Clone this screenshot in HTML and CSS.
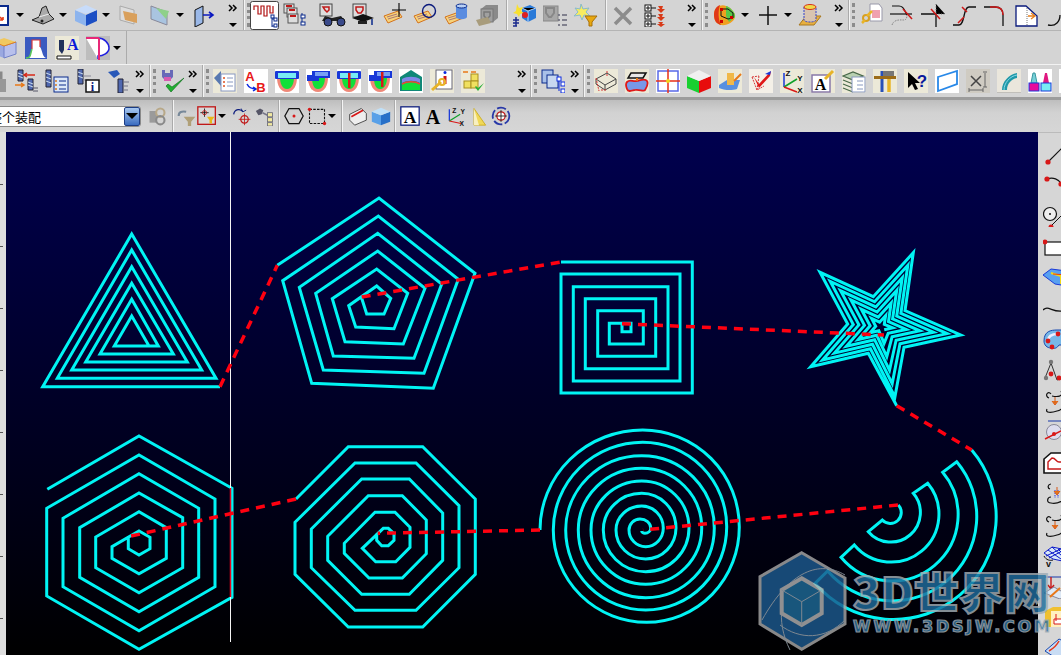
FILE: index.html
```html
<!DOCTYPE html>
<html lang="zh">
<head>
<meta charset="utf-8">
<title>CAD spiral toolpaths</title>
<link rel="stylesheet" href="styles.css">
</head>
<body>
<svg class="defs" aria-hidden="true">
<symbol id="fit" viewBox="0 0 24 24"><rect x="3" y="3" width="19" height="19" fill="#fff" stroke="#0a2a8c" stroke-width="2"/><path d="M8 8l3 3M8 8h3M8 8v3M17 17l-3-3M17 17h-3M17 17v-3" stroke="#e8401a" stroke-width="1.6" fill="none"/></symbol>
<symbol id="dev" viewBox="0 0 24 24"><path d="M1 17l7-3 3-9 4-2 3 8 5 5-11 5z" fill="#aaa" stroke="#222"/><path d="M8 14l10-3" stroke="#eee"/><circle cx="11" cy="18" r="1.5" fill="#222"/></symbol>
<symbol id="cube" viewBox="0 0 24 24"><path d="M1 7l11 5v11L1 18z" fill="#8db4ee"/><path d="M12 12l11-5v11l-11 5z" fill="#1c4fc4"/><path d="M1 7l11-5 11 5-11 4z" fill="#c8dcfa"/></symbol>
<symbol id="ghostbox" viewBox="0 0 24 24"><path d="M3 3l14 4v14l-14-4z" fill="#ddd" stroke="#aaa"/><path d="M6 8l14 3v9l-12-3z" fill="#d9a05c"/></symbol>
<symbol id="wedge" viewBox="0 0 24 24"><path d="M3 3l16 6v13L3 16z" fill="#a9c4e0" stroke="#889"/><path d="M8 5l13 3-3 8z" fill="#8fd08a"/></symbol>
<symbol id="door" viewBox="0 0 24 24"><path d="M3 7l8-4v17l-8 4z" fill="#9ab8e8" stroke="#111"/><path d="M11 12h10M17 9l4 3-4 3" stroke="#0a18c0" stroke-width="1.6" fill="none"/></symbol>
<symbol id="ops" viewBox="0 0 29 29"><rect x=".5" y=".5" width="28" height="28" rx="2" fill="#fff" stroke="#444"/><path d="M4 9V5h4v8h3V5h3v10h3V5h3v7h3V5" fill="none" stroke="#b01010" stroke-width="1.2"/><path d="M22 14v12M22 18h3M22 25h3" stroke="#0a2a8c"/><rect x="21" y="14" width="3" height="3" fill="#fff" stroke="#0a2a8c"/><rect x="24" y="17" width="3" height="3" fill="#fff" stroke="#0a2a8c"/><rect x="24" y="23" width="3" height="3" fill="#fff" stroke="#0a2a8c"/></symbol>
<symbol id="ops2" viewBox="0 0 24 24"><rect x="1" y="1" width="10" height="9" fill="#ddd" stroke="#555"/><rect x="4" y="5" width="10" height="9" fill="#ddd" stroke="#555"/><rect x="5" y="11" width="10" height="9" fill="#ddd" stroke="#555"/><path d="M3 3h6M6 7h6M7 13h6" stroke="#c01818" stroke-width="2"/><path d="M19 10v12" stroke="#0a2a8c"/><rect x="18" y="12" width="4" height="3" fill="#fff" stroke="#0a2a8c"/><rect x="18" y="19" width="4" height="3" fill="#fff" stroke="#0a2a8c"/></symbol>
<symbol id="bino" viewBox="0 0 28 24"><rect x="1" y="1" width="12" height="12" fill="#ddd" stroke="#444"/><path d="M4 4h6v3l-2 2-2-2z" fill="none" stroke="#c01818" stroke-width="1.5"/><path d="M6 13l7 2 9-2 4 5H3z" fill="#222"/><circle cx="9" cy="19" r="4" fill="#3a4a8a" stroke="#111"/><circle cx="22" cy="19" r="4" fill="#3a4a8a" stroke="#111"/></symbol>
<symbol id="cap" viewBox="0 0 24 24"><rect x="2" y="1" width="13" height="13" fill="#ddd" stroke="#444"/><path d="M5 4h7v3l-2 3H7L5 7z" fill="none" stroke="#c01818" stroke-width="1.5"/><path d="M1 15l11-4 11 4-11 4z" fill="#111"/><path d="M7 18v3h9v-3" fill="#222"/><path d="M21 16v6" stroke="#0a2a8c" stroke-width="1.5"/></symbol>
<symbol id="tagx" viewBox="0 0 24 24"><path d="M2 13l14-5 4 6-14 6z" fill="#f6d27a" stroke="#d4721c"/><path d="M5 14l10-3M6 16l10-3" stroke="#a77"/><path d="M17 0v14M10 7h14" stroke="#000" stroke-width="1.1"/></symbol>
<symbol id="tago" viewBox="0 0 24 24"><path d="M1 13l14-5 4 6-14 6z" fill="#f6d27a" stroke="#d4721c"/><path d="M4 14l10-3M5 16l10-3" stroke="#a77"/><circle cx="16" cy="8" r="6.5" fill="none" stroke="#0a1a7c" stroke-width="1.4"/></symbol>
<symbol id="tagc" viewBox="0 0 24 24"><path d="M1 14l14-5 4 6-14 6z" fill="#f6d27a" stroke="#d4721c"/><path d="M4 15l10-3M5 17l10-3" stroke="#a77"/><path d="M12 3v11a5 2 0 0 0 11 0V3z" fill="#5a8ce0"/><ellipse cx="17.500" cy="3" rx="5.500" ry="2" fill="#b8d0f4" stroke="#0a2a8c"/></symbol>
<symbol id="ghostgear" viewBox="0 0 24 24"><path d="M6 6l5-4h12v13l-5 4H6z" fill="#8a8a8a"/><rect x="6" y="6" width="12" height="13" fill="#a0a0a0" stroke="#777"/><path d="M9 9h6v4l-3 3-3-3z" fill="none" stroke="#777" stroke-width="1.5"/><path d="M1 17l12-3 3 6-12 3z" fill="#a89c7c"/></symbol>
<symbol id="spark" viewBox="0 0 24 24"><path d="M10 5l8-3 6 3v10l-8 4-6-4z" fill="#2a7ad8"/><path d="M10 5l6 3 8-3M16 8v11" stroke="#bcd6f8"/><path d="M5 1l2 4 4-1-2 4 3 2-4 1-1 3-2-3-4-1 3-2z" fill="#f8e030"/><circle cx="13" cy="12" r="3" fill="#e02020"/><path d="M1 23h4M1 20h6M1 17h6M4 14v9" stroke="#1a2a8c" stroke-width="1.5"/></symbol>
<symbol id="ghostlist" viewBox="0 0 24 24"><rect x="0" y="3" width="15" height="15" fill="#a8a8a8" stroke="#888"/><path d="M3 5h8v5l-3 4H6L3 10z" fill="none" stroke="#888" stroke-width="2"/><path d="M15 12h2M19 12h5M15 17h2M19 17h5M15 22h2M19 22h5" stroke="#667" stroke-width="1.5"/></symbol>
<symbol id="starf" viewBox="0 0 24 24"><path d="M7 1l2 5 6-1-3 4 4 4-6-1-2 5-2-5-6 1 4-4L1 5l5 1z" fill="#f8ec60" stroke="#8bc"/><path d="M11 13h12l-5 6v4h-3v-4z" fill="#e8a810" stroke="#a87008"/></symbol>
<symbol id="xg" viewBox="0 0 24 24"><path d="M4 5l16 16M20 5L4 21" stroke="#8c8c8c" stroke-width="3.500"/></symbol>
<symbol id="treea" viewBox="0 0 24 24"><g fill="#fff" stroke="#111"><rect x="1" y="2" width="6" height="6"/><rect x="1" y="10" width="6" height="6"/><rect x="1" y="18" width="6" height="6"/></g><path d="M4 3v4M2 5h4M4 11v4M2 13h4M4 19v4M2 21h4M7 5h5M7 13h5M7 21h5" stroke="#111"/><path d="M14 3h5l-1 3h3l-4 4-4-4h3z M14 11h5l-1 3h3l-4 4-4-4h3z M14 19h5l-1 2h3l-4 3-4-3h3z" fill="#d83a18"/></symbol>
<symbol id="rainbow" viewBox="0 0 24 24"><path d="M2 12C2 3 10 1 14 3c4 1 10 7 9 11-1 5-8 9-14 8C5 21 2 18 2 12z" fill="#f0a020"/><path d="M2 12C2 6 5 3 8 2c-2 6-2 14 1 20-4-1-7-4-7-10z" fill="#e03818"/><path d="M14 3c4 1 10 7 9 11l-6 5-3-6z" fill="#58c848"/><path d="M9 6h7l5 4v5l-5 1-7-3z" fill="none" stroke="#111"/><g fill="#c00"><rect x="8" y="5" width="3" height="3"/><rect x="8" y="17" width="3" height="3"/><rect x="18" y="13" width="3" height="3"/></g></symbol>
<symbol id="cross" viewBox="0 0 24 24"><path d="M12 3v19M3 12h18" stroke="#111" stroke-width="1.5"/></symbol>
<symbol id="cyl" viewBox="0 0 24 24"><path d="M1 22l7-9h15l-7 9z" fill="#e8b040" stroke="#a87820"/><path d="M6 4v13a6 2 0 0 0 12 0V4" fill="#d8c4b0" stroke="#3040c8" stroke-dasharray="2 1"/><ellipse cx="12" cy="4" rx="6" ry="2.500" fill="#f0d848" stroke="#d83018"/></symbol>
<symbol id="keydoc" viewBox="0 0 24 24"><path d="M11 1h9l3 4v13H11z" fill="#fff" stroke="#99a"/><path d="M13 7h8v8h-8z" fill="#f0a0b0"/><circle cx="7" cy="15" r="3" fill="none" stroke="#d8a020" stroke-width="2"/><path d="M8 13l5-5M3 20l3-3" stroke="#e8b428" stroke-width="2.500"/></symbol>
<symbol id="trim1" viewBox="0 0 24 24"><path d="M2 3h7c6 0 6 7 8 9" fill="none" stroke="#111" stroke-width="1.2"/><path d="M0 11h22" stroke="#111" stroke-width="1.2"/><path d="M2 22c2-6 8-5 12-5 2 0 3-2 3-5" fill="none" stroke="#888" stroke-dasharray="1.500 1"/><path d="M13 6l9 10" stroke="#d01818" stroke-width="1.500"/></symbol>
<symbol id="trim2" viewBox="0 0 24 24"><path d="M0 11h15M15 11v13" stroke="#111" stroke-width="1.300"/><path d="M15 1v10h9" stroke="#777" stroke-dasharray="1 1.500"/><path d="M10 6l9 10" stroke="#d01818" stroke-width="1.500"/></symbol>
<symbol id="trim3" viewBox="0 0 24 24"><path d="M1 22h6c6 0 4-18 10-18h7" fill="none" stroke="#111" stroke-width="1.300"/><path d="M10 4l5 5M6 20l6-6" stroke="#d01818" stroke-width="1.500"/></symbol>
<symbol id="trim4" viewBox="0 0 24 24"><path d="M1 4h11c6 0 8 4 8 8v11" fill="none" stroke="#111" stroke-width="1.300"/><path d="M7 4h5c5 0 8 3 8 8" fill="none" stroke="#d01818" stroke-width="1.500"/></symbol>
<symbol id="chamf" viewBox="0 0 24 24"><path d="M2 3h10l11 10v10H2z" fill="#fff" stroke="#0a1a7c" stroke-width="1.300"/><path d="M14 13h6M17 10l4 3-4 3" stroke="#e8801c" stroke-width="1.300" fill="none"/><path d="M13 5v18" stroke="#777" stroke-dasharray="1 1"/></symbol>
<symbol id="hook" viewBox="0 0 24 24"><path d="M3 22c8 2 12-4 12-10" fill="none" stroke="#111" stroke-width="1.300"/></symbol>
<symbol id="boxy" viewBox="0 0 24 24"><path d="M1 6l10 4v12L1 18z" fill="#9aa8e0"/><path d="M11 10l12-4v12l-12 4z" fill="#b8c0ec" stroke="#7080c8"/><path d="M1 6l10-4 12 4-12 4z" fill="#f0c860"/><path d="M1 6l10 4 12-4" stroke="#e08020" fill="none"/></symbol>
<symbol id="peak" viewBox="0 0 24 24"><path d="M1 1h22v22H1z" fill="#3a5ac0"/><path d="M2 22c5 0 4-3 6-9V4h8v7c3 4 2 11 7 11z" fill="#fff"/><path d="M2 22c5 0 4-3 6-9" stroke="#58c858" fill="none" stroke-width="1.500"/><path d="M8 13V4h8v7" stroke="#d83a3a" fill="none" stroke-width="1.200"/></symbol>
<symbol id="apen" viewBox="0 0 24 24"><rect width="24" height="24" fill="#ece9d8"/><path d="M4 4h5v10l-2 4-3-4z" fill="#20305c"/><path d="M2 20h14v3H2z" fill="#fff" stroke="#111"/></symbol>
<symbol id="arcpink" viewBox="0 0 24 24"><rect width="24" height="24" fill="#bdbdbd"/><path d="M0 2h12c6 0 11 5 11 10s-6 8-11 8v3" fill="#fff" stroke="#2020e0" stroke-width="1.500"/><path d="M0 2h13M13 2v22" stroke="#e82878" stroke-width="2" fill="none"/></symbol>
<symbol id="lock" viewBox="0 0 24 24"><rect x="1" y="10" width="22" height="13" fill="#989898"/><path d="M6 10V4h12v6" fill="none" stroke="#888" stroke-width="3"/></symbol>
<symbol id="spra" viewBox="0 0 24 24"><path d="M4 1h5v11H4zM14 10h5v11h-5z" fill="#5068b0" stroke="#223"/><path d="M4 4l5 2M4 7l5 2M14 13l5 2M14 16l5 2" stroke="#cde"/><path d="M21 6H11M13 4l-3 2 3 2" stroke="#d82818" fill="none" stroke-width="1.500"/><path d="M1 16h8M7 14l3 2-3 2" stroke="#e87818" fill="none" stroke-width="1.500"/><path d="M19 22h5M19 19h5" stroke="#556"/></symbol>
<symbol id="sprl" viewBox="0 0 24 24"><path d="M1 1h5v17H1z" fill="#5068b0" stroke="#223"/><path d="M1 4l5 2M1 8l5 2M1 12l5 2" stroke="#cde"/><rect x="9" y="8" width="14" height="15" fill="#dce8f8" stroke="#0a2a8c"/><path d="M14 12h7M14 16h7M14 20h7" stroke="#0a2a8c"/><path d="M10 12h2M10 16h2M10 20h2" stroke="#d87820" stroke-width="1.500"/></symbol>
<symbol id="spri" viewBox="0 0 24 24"><path d="M2 0h5v15H2z" fill="#5068b0" stroke="#223"/><path d="M2 3l5 2M2 7l5 2" stroke="#cde"/><path d="M7 7h8M7 11h6" stroke="#889"/><rect x="10" y="11" width="13" height="12" fill="#fff" stroke="#111" stroke-width="1.500"/></symbol>
<symbol id="sprf" viewBox="0 0 24 24"><path d="M1 3l9-2 3 4-6 4z" fill="#2858b8"/><path d="M11 10h5v14h-5z" fill="#5068b0" stroke="#223"/><path d="M16 13h6M16 17h5M16 21h5" stroke="#778"/></symbol>
<symbol id="checkt" viewBox="0 0 24 24"><path d="M2 1h3v3h5V1h3v7l-3 3H5L2 8z" fill="#6868b8"/><path d="M4 8h7v4H4z" fill="#d85ab0"/><path d="M6 17l5 6L24 9l-12 9-4-3z" fill="#20b030" stroke="#0a6818" stroke-width=".6"/></symbol>
<symbol id="doclist" viewBox="0 0 24 24"><rect width="24" height="24" fill="#ece9d8"/><path d="M1 9l7-7v15z" fill="#5878b0"/><rect x="8" y="5" width="14" height="17" fill="#fff" stroke="#8898c0"/><path d="M14 9h6M14 13h6M14 17h6" stroke="#8898c0"/><path d="M10 9h2M10 13h2M10 17h2" stroke="#e05020" stroke-width="1.500"/></symbol>
<symbol id="ab" viewBox="0 0 24 24"><rect width="24" height="24" fill="#fff"/><path d="M3 15c2 4 5 5 9 5M9 18l3 2-3 2" fill="none" stroke="#0a2ae0" stroke-width="1.500"/></symbol>
<symbol id="mold1" viewBox="0 0 24 24"><rect width="24" height="24" fill="#fff"/><path d="M2 8h20c0 8-3 15-10 15S2 16 2 8z" fill="#ef8878"/><path d="M5 8h14c0 6-2 12-7 12S5 14 5 8z" fill="#10e038"/><rect x="0" y="2" width="24" height="8" rx="1" fill="#1838d8"/><rect x="3" y="4" width="18" height="5" fill="#78ecf4"/></symbol>
<symbol id="mold2" viewBox="0 0 24 24"><rect width="24" height="24" fill="#fff"/><path d="M2 8h20c0 8-3 15-10 15S2 16 2 8z" fill="#ef8878"/><path d="M6 8h13c0 6-2 12-7 12S6 14 6 8z" fill="#10e038"/><path d="M2 8l5 12" stroke="#ef8878" stroke-width="3"/><rect x="1" y="6" width="12" height="6" fill="#1838d8"/><rect x="6" y="2" width="18" height="7" fill="#1838d8"/><rect x="9" y="3" width="13" height="4" fill="#78a0f4"/></symbol>
<symbol id="mold3" viewBox="0 0 24 24"><rect width="24" height="24" fill="#fff"/><path d="M2 8h20c0 8-3 15-10 15S2 16 2 8z" fill="#ef8878"/><path d="M5 8h14c0 6-2 12-7 12S5 14 5 8z" fill="#10e038"/><rect x="0" y="2" width="24" height="8" rx="1" fill="#1838d8"/><rect x="3" y="4" width="18" height="5" fill="#78ecf4"/><rect x="11" y="4" width="2.500" height="15" fill="#d81818"/></symbol>
<symbol id="mold4" viewBox="0 0 24 24"><rect width="24" height="24" fill="#fff"/><path d="M2 8h20c0 8-3 15-10 15S2 16 2 8z" fill="#ef8878"/><path d="M6 8h13c0 6-2 12-7 12S6 14 6 8z" fill="#10e038"/><rect x="1" y="6" width="12" height="6" fill="#1838d8"/><rect x="6" y="2" width="18" height="7" fill="#1838d8"/><rect x="9" y="3" width="13" height="4" fill="#78a0f4"/><rect x="13" y="3" width="2.500" height="15" fill="#d81818"/></symbol>
<symbol id="mold5" viewBox="0 0 24 24"><rect width="24" height="24" fill="#fff"/><path d="M1 8l11-7 11 7v14H1z" fill="#108878"/><path d="M3 10c5-3 13-3 18 0v4c-5-3-13-3-18 0z" fill="#8088e8"/><path d="M3 15c5-3 13-3 18 0v6H3z" fill="#10e038"/><path d="M3 15c5-3 13-3 18 0" stroke="#e84838" fill="none" stroke-width="1.500"/></symbol>
<symbol id="docikey" viewBox="0 0 24 24"><rect width="24" height="24" fill="#ece9d8"/><rect x="6" y="1" width="16" height="19" fill="#fff" stroke="#667"/><path d="M15 7v8" stroke="#d01818" stroke-width="3"/><circle cx="15" cy="3.500" r="1.500" fill="#0a2ae0"/><path d="M2 21l9-8" stroke="#e8b428" stroke-width="3"/><circle cx="12" cy="13" r="3" fill="none" stroke="#e8b428" stroke-width="2"/></symbol>
<symbol id="yellowchk" viewBox="0 0 24 24"><rect width="24" height="24" fill="#ece9d8"/><g fill="#f0e060" stroke="#a89020"><rect x="10" y="5" width="7" height="7"/><rect x="3" y="12" width="7" height="7"/><rect x="10" y="12" width="7" height="7"/></g><path d="M14 18l3 4 6-8-6 5-2-2z" fill="#28b038"/><path d="M2 3h5M10 3h5" stroke="#e87818" stroke-width="1.500"/></symbol>
<symbol id="doctree" viewBox="0 0 24 24"><rect x="1" y="1" width="11" height="13" fill="#a8c0e8" stroke="#0a2a8c"/><rect x="6" y="6" width="11" height="13" fill="#c8d8f0" stroke="#0a2a8c"/><path d="M18 8v14" stroke="#0a2ae0"/><rect x="16" y="8" width="4" height="4" fill="#fff" stroke="#0a2ae0"/><rect x="20" y="13" width="4" height="4" fill="#fff" stroke="#0a2ae0"/><rect x="20" y="20" width="4" height="4" fill="#fff" stroke="#0a2ae0"/></symbol>
<symbol id="wire" viewBox="0 0 24 24"><rect width="24" height="24" fill="#ece9d8"/><path d="M2 10l11-6 9 6-11 6zM2 10v5l9 6 11-6v-5M11 16v5" fill="none" stroke="#444"/><path d="M13 2v5M2 9l3 13M7 21h6" stroke="#d83838" stroke-dasharray="2 1" fill="none"/></symbol>
<symbol id="blob" viewBox="0 0 24 24"><rect width="24" height="24" fill="#ece9d8"/><path d="M2 13c3-3 6 0 10-1s8-3 10 0-1 7-2 9-6-1-10 0-7 2-8-1-2-5 0-7z" fill="#7898e8" stroke="#e01818" stroke-width="1.800"/><path d="M6 4h15l-3 5H3z" fill="#e8e8e8" stroke="#111" stroke-width="1.500"/><path d="M12 9v3" stroke="#e87818" stroke-width="2"/></symbol>
<symbol id="crossb" viewBox="0 0 24 24"><rect width="24" height="24" fill="#fff"/><rect x="2" y="2" width="20" height="20" fill="#fff" stroke="#5868e8" stroke-width="1.500"/><path d="M12 0v24M0 12h24" stroke="#e83018" stroke-width="1.500"/><circle cx="12" cy="12" r="2" fill="#f0d818"/></symbol>
<symbol id="rgb" viewBox="0 0 24 24"><path d="M0 7l12 5v12L0 19z" fill="#18d030"/><path d="M12 12l12-5v12l-12 5z" fill="#e80c0c"/><path d="M0 7l12-6 12 6-12 5z" fill="#f0f0f0"/></symbol>
<symbol id="blockc" viewBox="0 0 24 24"><rect width="24" height="24" fill="#ece9d8"/><path d="M1 16l8-5h13l-3 9c-6 2-14 1-18-1z" fill="#5890e0"/><rect x="9" y="4" width="7" height="12" fill="#f0b848"/><path d="M16 12l7-7" stroke="#e87818" stroke-width="2"/></symbol>
<symbol id="graph" viewBox="0 0 24 24"><rect width="24" height="24" fill="#f4f0e8"/><path d="M3 8l5 13 7-4M3 8l7-1M8 21l2-14" stroke="#d83838" fill="none" stroke-dasharray="2 1"/><path d="M5 8l5 7L22 2l-1 5-11 12z" fill="#e01818"/><path d="M16 5l6-3-1 4z" fill="#1838d8"/></symbol>
<symbol id="xyz" viewBox="0 0 24 24"><rect width="24" height="24" fill="#ece9d8"/><path d="M4 4v14" stroke="#1838d8" stroke-width="1.500"/><path d="M4 18l13-8" stroke="#10a028" stroke-width="1.500"/><path d="M4 18l13 5" stroke="#d81818" stroke-width="1.500"/></symbol>
<symbol id="aframe" viewBox="0 0 24 24"><rect width="24" height="24" fill="#ece9d8"/><rect x="1" y="6" width="18" height="17" fill="#fff" stroke="#8878a8" stroke-width="1.500"/><path d="M14 10l8-8" stroke="#e8b428" stroke-width="3"/></symbol>
<symbol id="layers" viewBox="0 0 24 24"><rect width="24" height="24" fill="#ece9d8"/><path d="M1 7l10-4 10 4-10 4zM1 11l10 4M1 15l10 4M1 19l10 4" fill="#b8d0b0" stroke="#486848" stroke-width="1.300"/><rect x="10" y="8" width="13" height="15" fill="#fff" stroke="#8898c0"/><path d="M15 12h6M15 16h6M15 20h6" stroke="#8898c0"/></symbol>
<symbol id="tools" viewBox="0 0 24 24"><rect width="24" height="24" fill="#ece9d8"/><path d="M9 2v21" stroke="#2850b8" stroke-width="3"/><path d="M16 6v17" stroke="#e8b428" stroke-width="3.500"/><path d="M10 2h11v5H10z" fill="#777"/><path d="M1 7l22 0v3H1z" fill="#9c6c18"/></symbol>
<symbol id="helpq" viewBox="0 0 24 24"><rect width="24" height="24" fill="#ece9d8"/><path d="M4 3v16l4-4 3 6 3-1-3-6h5z" fill="#000"/></symbol>
<symbol id="para" viewBox="0 0 24 24"><rect width="24" height="24" fill="#fff"/><path d="M3 8L22 2v13L3 22z" fill="none" stroke="#2888e8" stroke-width="1.800"/></symbol>
<symbol id="dimx" viewBox="0 0 24 24"><rect width="24" height="24" fill="#cfcbc2"/><path d="M5 7l10 10M15 7L5 17" stroke="#444" stroke-width="1.500"/><path d="M3 21h14M19 4v14" stroke="#666"/><path d="M17 3h4M17 18h4M3 19v4M17 19v4" stroke="#666"/></symbol>
<symbol id="tealarc" viewBox="0 0 24 24"><rect width="24" height="24" fill="#eae6dc"/><path d="M5 21C5 13 12 5 20 4v5C14 10 10 15 10 21z" fill="#2098a8"/><path d="M7 21C7 14 13 7 20 6" stroke="#88d8e8" fill="none"/><path d="M0 24h24" stroke="#999"/></symbol>
<symbol id="twin" viewBox="0 0 24 24"><rect width="24" height="24" fill="#fff"/><path d="M3 14l2-10h2l2 10z" fill="#78d0d8" stroke="#3898a0"/><path d="M15 14l2-10h2l2 10z" fill="#e01880"/><rect x="1" y="14" width="10" height="8" fill="#e80c9c" stroke="#1838d8"/><rect x="13" y="14" width="10" height="8" fill="#78ecf4" stroke="#1838d8"/></symbol>
<symbol id="combo-ass" viewBox="0 0 24 24"><path d="M3 6h9v14H3z" fill="#9a9a9a"/><circle cx="16" cy="8" r="5" fill="none" stroke="#b8a888" stroke-width="2.500"/><circle cx="16" cy="17" r="5" fill="none" stroke="#8a8a8a" stroke-width="2.500"/></symbol>
<symbol id="funnelg" viewBox="0 0 24 24"><path d="M2 12c0-5 4-6 9-5" fill="none" stroke="#789" stroke-width="2.500"/><path d="M8 13h14l-5 6v5h-4v-5z" fill="#b0a078"/></symbol>
<symbol id="selbox" viewBox="0 0 24 24"><rect x="1" y="1" width="21" height="21" fill="#d8d8d8" stroke="#c01818" stroke-width="1.600"/><path d="M9 3v10M4 8h10" stroke="#111"/><circle cx="9" cy="8" r="2.500" fill="none" stroke="#c01818"/><path d="M12 13h9l-3 4v4h-3v-4z" fill="#e8b818"/></symbol>
<symbol id="tgtrot" viewBox="0 0 24 24"><path d="M2 10c1-7 9-7 11-3" fill="none" stroke="#0a1a7c" stroke-width="1.500"/><path d="M11 3l2 4 4-2" fill="none" stroke="#0a1a7c"/><circle cx="15" cy="16" r="4.500" fill="none" stroke="#c01818" stroke-width="1.500"/><path d="M15 9v14M8 16h14" stroke="#c01818"/></symbol>
<symbol id="sel2" viewBox="0 0 24 24"><path d="M1 6l5-3 4 2-2 5-4 1z" fill="#556"/><path d="M9 8l6 3" stroke="#778" stroke-width="2"/><g fill="#f0e8a0" stroke="#667"><rect x="15" y="8" width="6" height="5"/><rect x="15" y="14" width="6" height="5"/><rect x="15" y="20" width="6" height="4"/></g></symbol>
<symbol id="hexp" viewBox="0 0 24 24"><path d="M6 3h12l5 9-5 9H6L1 12z" fill="none" stroke="#111" stroke-width="1.500"/><circle cx="12" cy="12" r="1.800" fill="#d81818"/></symbol>
<symbol id="rectp" viewBox="0 0 24 24"><rect x="3" y="4" width="18" height="17" fill="none" stroke="#111" stroke-width="1.300" stroke-dasharray="3 1.500"/><circle cx="3" cy="4" r="2" fill="#d81818"/><circle cx="21" cy="21" r="2" fill="#d81818"/></symbol>
<symbol id="box3" viewBox="0 0 24 24"><path d="M2 10l14-7 6 6v8l-14 6-6-6z" fill="#eee" stroke="#333"/><path d="M4 13l14-8" stroke="#d81818" stroke-width="2"/></symbol>
<symbol id="cubeb" viewBox="0 0 24 24"><path d="M1 7l11 4v12L1 19z" fill="#58a0e8"/><path d="M12 11l11-4v12l-11 4z" fill="#2870c8"/><path d="M1 7l11-5 11 5-11 4z" fill="#c0e0f8"/></symbol>
<symbol id="aboxed" viewBox="0 0 24 24"><rect x="1" y="1" width="22" height="22" fill="#fff" stroke="#0a1a7c" stroke-width="1.500"/></symbol>
<symbol id="axes" viewBox="0 0 24 24"><path d="M4 4v14" stroke="#1838d8" stroke-width="1.500"/><path d="M4 18l13-8" stroke="#10a028" stroke-width="1.500"/><path d="M4 18l14 3" stroke="#d81818" stroke-width="1.500"/></symbol>
<symbol id="tri" viewBox="0 0 24 24"><path d="M6 3l14 20H6z" fill="#f0d858" stroke="#c8a818"/><path d="M6 3l6 20H6z" fill="#f8f0c0"/></symbol>
<symbol id="tgt" viewBox="0 0 24 24"><circle cx="12" cy="12" r="10" fill="none" stroke="#2838a8" stroke-width="2.200" stroke-dasharray="11 3"/><circle cx="12" cy="12" r="5" fill="#fff" stroke="#c01818" stroke-width="1.500"/><path d="M12 5v14M5 12h14" stroke="#111"/></symbol>
<symbol id="r-line" viewBox="0 0 24 24"><path d="M4 22L24 2" stroke="#111" stroke-width="1.100"/><circle cx="5" cy="21" r="2.600" fill="#d81818"/></symbol>
<symbol id="r-arc" viewBox="0 0 24 24"><path d="M4 7c6-2 12 0 14 5" fill="none" stroke="#111" stroke-width="1.300"/><circle cx="4" cy="7" r="2.600" fill="#d81818"/><circle cx="18" cy="12" r="2.600" fill="#d81818"/></symbol>
<symbol id="r-circ" viewBox="0 0 24 24"><circle cx="7" cy="11" r="6.500" fill="#eee" stroke="#111" stroke-width="1.200"/><circle cx="7" cy="11" r="1" fill="#111"/><path d="M7 24l12-12" stroke="#111"/><circle cx="8" cy="24" r="2.500" fill="#d81818"/></symbol>
<symbol id="r-rect" viewBox="0 0 24 24"><rect x="2" y="8" width="26" height="13" fill="#fff" stroke="#111" stroke-width="1.200"/><circle cx="2" cy="8" r="2.400" fill="#d81818"/></symbol>
<symbol id="r-mesh" viewBox="0 0 24 24"><path d="M0 10l8-6 16 2v15l-12-2z" fill="#58a0f0" stroke="#1838d8"/><path d="M8 8l10 3v8" fill="none" stroke="#f0d818" stroke-width="2"/><path d="M10 9l14 1" stroke="#e83818"/></symbol>
<symbol id="r-wave" viewBox="0 0 24 24"><path d="M0 14c6-6 10 5 24 0" fill="none" stroke="#111" stroke-width="1.300"/></symbol>
<symbol id="r-surf" viewBox="0 0 24 24"><path d="M1 14C1 4 8 3 14 3h10v15H16c-2 3-4 4-8 3-4 0-7-3-7-7z" fill="#78b8e8" stroke="#1848b0"/><path d="M5 14c0-5 4-7 10-7" stroke="#eef" stroke-width="2.500" fill="none"/><circle cx="5" cy="14" r="2.400" fill="#d81818"/><circle cx="15" cy="7" r="2.400" fill="#d81818"/><circle cx="9" cy="20" r="2.400" fill="#d81818"/></symbol>
<symbol id="r-tri" viewBox="0 0 24 24"><path d="M2 20L8 5l6 17 10-3" fill="none" stroke="#333"/><circle cx="8" cy="4" r="2.200" fill="#777"/><circle cx="3" cy="20" r="2.200" fill="#777"/><circle cx="8" cy="16" r="2.400" fill="#d81818"/><circle cx="16" cy="20" r="2.400" fill="#d81818"/></symbol>
<symbol id="r-hook" viewBox="0 0 24 24"><path d="M8 5c-3-4-7 2-2 4M18 2c3 6-4 6-9 5M4 20c-2 4 4 4 10 2 6-1 6-5 6-8" fill="none" stroke="#111" stroke-width="1.200"/><path d="M12 8v6M9 12l3 4 3-4" fill="#e87818" stroke="#d85818"/></symbol>
<symbol id="r-ball" viewBox="0 0 24 24"><path d="M5 1h20M22 1v18" stroke="#1838a8"/><circle cx="11" cy="12" r="7.500" fill="#dde" stroke="#889"/><path d="M2 19l16-8" stroke="#d81818" stroke-width="1.500"/><circle cx="11" cy="14" r="2" fill="#d81818"/></symbol>
<symbol id="r-round" viewBox="0 0 24 24"><path d="M1 22V8l7-6h9c4 0 7 2 7 5v15z" fill="#fff" stroke="#111" stroke-width="1.600"/><path d="M5 18v-7l4-4c4 0 4 4 7 4h8v7z" fill="#fff" stroke="#c81818" stroke-width="1.400"/></symbol>
<symbol id="r-hook2" viewBox="0 0 24 24"><path d="M8 2c-3 0-4 4-1 5M8 15c-4 0-5 6 0 6 5 1 10-1 14-4" fill="none" stroke="#111" stroke-width="1.200"/><path d="M12 8v8M15 8v8" stroke="#2838e8" stroke-dasharray="1.500 1"/><path d="M20 4v14" stroke="#2838e8" stroke-dasharray="1.500 1"/><path d="M14 5v5M11 9l3 4 3-4" fill="#e87818" stroke="#d85818"/></symbol>
<symbol id="r-grid" viewBox="0 0 24 24"><path d="M1 9l8-6 15 3v12L10 15z" fill="#d8e8f8" stroke="#0a18c8"/><path d="M5 6l13 9M9 3l10 9M15 5l9 9M3 12L20 4M6 14l15-8" stroke="#0a18c8"/><path d="M1 12c2 4 6 5 9 4" fill="none" stroke="#111"/></symbol>
<symbol id="r-pin" viewBox="0 0 24 24"><path d="M2 2h22" stroke="#1838a8"/><path d="M8 2v12M5 10l3 4 3-4" stroke="#c81818" fill="none" stroke-width="1.400"/><path d="M1 18l10-6 14 8-8 4z" fill="#dde8f4" stroke="#889"/><path d="M7 22l10-9" stroke="#e87818" stroke-width="2"/></symbol>
<symbol id="r-pack" viewBox="0 0 24 24"><path d="M2 5l8-4 14 0v20H2z" fill="#f0c030"/><path d="M8 5h16v16H8z" fill="#fff0c0"/><path d="M13 8v7M11 13h8v5h-8z" fill="#fff" stroke="#d81818"/></symbol>
<symbol id="r-fold" viewBox="0 0 24 24"><path d="M2 14L16 2l8 4v14l-8 3z" fill="#c8dcf4" stroke="#1848b0"/><path d="M6 14c5-3 8-6 10-10" stroke="#e83818" stroke-width="1.500" fill="none"/></symbol>
<symbol id="chev" viewBox="0 0 10 8"><path d="M1 1l3 3-3 3M5 1l3 3-3 3" fill="none" stroke="#000" stroke-width="1.500"/></symbol>
</svg>

<header class="toolbars">
  <div class="row r1">
    <svg class="ic start14"><use href="#fit"/></svg><i class="caret ml6"></i>
    <svg class="ic ml5"><use href="#dev"/></svg><i class="caret ml4"></i>
    <svg class="ic ml5"><use href="#cube"/></svg><i class="caret ml4"></i>
    <svg class="ic ml5"><use href="#ghostbox"/></svg>
    <svg class="ic"><use href="#wedge"/></svg><i class="caret ml4"></i>
    <svg class="ic ml6"><use href="#door"/></svg>
    <div class="more ml12"><svg class="chev"><use href="#chev"/></svg><i class="caret"></i></div>
    <b class="sep ml5"></b><b class="grip"></b>
    <svg class="wide ml-3"><use href="#ops"/></svg>
    <svg class="ic ml4"><use href="#ops2"/></svg>
    <svg class="ic bino ml12"><use href="#bino"/></svg>
    <svg class="ic ml4"><use href="#cap"/></svg>
    <svg class="ic"><use href="#tagx"/></svg>
    <svg class="ic"><use href="#tago"/></svg>
    <svg class="ic"><use href="#tagc"/></svg>
    <svg class="ic"><use href="#ghostgear"/></svg>
    <b class="sep ml7"></b>
    <svg class="ic ml4"><use href="#spark"/></svg>
    <svg class="ic"><use href="#ghostlist"/></svg>
    <svg class="ic"><use href="#starf"/></svg>
    <b class="sep ml7"></b>
    <svg class="ic ml4"><use href="#xg"/></svg>
    <svg class="ic ml9"><use href="#treea"/></svg>
    <div class="more ml19"><svg class="chev"><use href="#chev"/></svg><i class="caret"></i></div>
    <b class="sep ml4"></b><b class="grip"></b>
    <svg class="ic"><use href="#rainbow"/></svg><i class="caret ml5"></i>
    <svg class="ic ml5"><use href="#cross"/></svg><i class="caret ml4"></i>
    <svg class="ic ml4"><use href="#cyl"/></svg>
    <div class="more ml12"><svg class="chev"><use href="#chev"/></svg><i class="caret"></i></div>
    <b class="sep ml4"></b><b class="grip"></b>
    <svg class="ic"><use href="#keydoc"/></svg>
    <svg class="ic"><use href="#trim1"/></svg>
    <svg class="ic"><use href="#trim2"/></svg>
    <svg class="ic"><use href="#trim3"/></svg>
    <svg class="ic"><use href="#trim4"/></svg>
    <svg class="ic"><use href="#chamf"/></svg>
    <svg class="ic"><use href="#hook"/></svg>
  </div>

  <div class="row r2">
    <div class="box">
      <svg class="ic start7"><use href="#boxy"/></svg>
      <svg class="ic"><use href="#peak"/></svg>
      <svg class="ic" viewBox="0 0 24 24"><use href="#apen"/><text x="12" y="14" class="ta">A</text></svg>
      <svg class="ic"><use href="#arcpink"/></svg>
      <i class="caret ml3"></i>
    </div>
  </div>

  <div class="row r3">
    <svg class="ic start17"><use href="#lock"/></svg>
    <svg class="ic"><use href="#spra"/></svg>
    <svg class="ic"><use href="#sprl"/></svg>
    <svg class="ic" viewBox="0 0 24 24"><use href="#spri"/><text x="16.500" y="22" class="tb">i</text></svg>
    <svg class="ic"><use href="#sprf"/></svg>
    <div class="more ml4"><svg class="chev"><use href="#chev"/></svg><i class="caret"></i></div>
    <b class="sep ml4"></b><b class="grip"></b>
    <svg class="ic"><use href="#checkt"/></svg>
    <div class="more ml4"><svg class="chev"><use href="#chev"/></svg><i class="caret"></i></div>
    <b class="sep ml4"></b><b class="grip"></b>
    <svg class="ic"><use href="#doclist"/></svg>
    <svg class="ic" viewBox="0 0 24 24"><use href="#ab"/><text x="6" y="12" class="tc">A</text><text x="17" y="23" class="tc">B</text></svg>
    <svg class="ic"><use href="#mold1"/></svg>
    <svg class="ic"><use href="#mold2"/></svg>
    <svg class="ic"><use href="#mold3"/></svg>
    <svg class="ic"><use href="#mold4"/></svg>
    <svg class="ic"><use href="#mold5"/></svg>
    <svg class="ic"><use href="#docikey"/></svg>
    <svg class="ic"><use href="#yellowchk"/></svg>
    <div class="more ml32"><svg class="chev"><use href="#chev"/></svg><i class="caret"></i></div>
    <b class="sep ml3"></b><b class="grip"></b>
    <svg class="ic"><use href="#doctree"/></svg>
    <div class="more ml5"><svg class="chev"><use href="#chev"/></svg><i class="caret"></i></div>
    <b class="sep ml3"></b><b class="grip"></b>
    <svg class="ic"><use href="#wire"/></svg>
    <svg class="ic"><use href="#blob"/></svg>
    <svg class="ic"><use href="#crossb"/></svg>
    <svg class="ic"><use href="#rgb"/></svg>
    <svg class="ic"><use href="#blockc"/></svg>
    <svg class="ic"><use href="#graph"/></svg>
    <svg class="ic" viewBox="0 0 24 24"><use href="#xyz"/><text x="8" y="7" class="td">Z</text><text x="20" y="12" class="td">Y</text><text x="20" y="24" class="td">X</text></svg>
    <svg class="ic" viewBox="0 0 24 24"><use href="#aframe"/><text x="9.500" y="21" class="te">A</text></svg>
    <svg class="ic"><use href="#layers"/></svg>
    <svg class="ic"><use href="#tools"/></svg>
    <svg class="ic" viewBox="0 0 24 24"><use href="#helpq"/><text x="18" y="18" class="tf">?</text></svg>
    <svg class="ic"><use href="#para"/></svg>
    <svg class="ic"><use href="#dimx"/></svg>
    <svg class="ic"><use href="#tealarc"/></svg>
    <svg class="ic"><use href="#twin"/></svg>
    <svg class="ic"><use href="#para"/></svg>
  </div>

  <div class="row r4">
    <div class="combo"><span class="combo-text">整个装配</span><span class="combo-btn"><i class="caret big"></i></span></div>
    <svg class="sm ml6"><use href="#combo-ass"/></svg>
    <b class="sep ml5"></b>
    <svg class="sm ml3"><use href="#funnelg"/></svg>
    <svg class="sm"><use href="#selbox"/></svg><i class="caret ml1"></i>
    <svg class="sm ml4"><use href="#tgtrot"/></svg>
    <svg class="sm ml3"><use href="#sel2"/></svg>
    <b class="sep ml3"></b>
    <svg class="sm ml4"><use href="#hexp"/></svg>
    <svg class="sm ml3"><use href="#rectp"/></svg><i class="caret ml1"></i>
    <b class="sep ml3"></b>
    <svg class="sm ml5"><use href="#box3"/></svg>
    <svg class="sm ml3"><use href="#cubeb"/></svg>
    <b class="sep ml3"></b>
    <svg class="sm ml4" viewBox="0 0 24 24"><use href="#aboxed"/><text x="12" y="20" class="tg">A</text></svg>
    <svg class="sm ml3" viewBox="0 0 24 24"><text x="12" y="21" class="th">A</text></svg>
    <svg class="sm ml3" viewBox="0 0 24 24"><use href="#axes"/><text x="10" y="8" class="td">Z</text><text x="20" y="10" class="td">Y</text><text x="19" y="24" class="td">X</text></svg>
    <svg class="sm ml3"><use href="#tri"/></svg>
    <svg class="sm ml2"><use href="#tgt"/></svg>
  </div>
</header>

<main class="work">
  <div class="ruler"></div>
  <svg class="canvas" viewBox="6 132 1032 523" preserveAspectRatio="none">
    <g class="cy">
      <path d="M220 386.700H42.700L131.700 234 216 378.300H57.300L131.700 250 201.700 370H71.700L131.700 266.700 187.300 362H85.700L131.700 283.300 173.300 354H100L131.700 299.300 158.300 346H114.300L131.700 316 149 346"/>
      <path d="M277.300 265.300L379 198 475 273.300 433.300 388.300 311.700 383.300 282.700 280.700 378.300 216 458.300 279.300 424 373.300 323.300 370 299.300 287.300 377.700 233.300 441.700 284 414 358.300 333.300 356 315.700 293.300 377.700 251 425 288.300 403.300 344 345 341.700 332.300 298.700 376.700 269 407.700 293.300 394 328.700 355.700 327 348.700 305.700 376.700 286 390.700 298.300 384 314H366.700L361.700 298.300"/>
      <path d="M561 262H692.300V393H561V274H680V381H573.300V286.700H668V368.700H585.300V298.700H655.700V356.300H597.700V310.700H643.300V344H609.300V323.300H631V331.700H622V323.300"/>
      <path d="M896.700 405.700L868.300 353.300 810.700 366.700 847.700 324 820 272.300 873.300 296.700 913.300 252.700 905 310.700 960.700 335 904 347.300 894.900 397 870.400 348.800 822.600 359.900 853.300 324.500 830.300 281.500 874.600 301.800 907.800 265.300 900.900 313.400 947.100 333.600 900 343.800 892.200 383.600 872.500 344.300 834.500 353.100 858.900 324.900 840.600 290.800 875.800 306.900 902.200 277.900 896.700 316.100 933.500 332.200 896.100 340.300 889.500 370.200 874.600 339.700 846.400 346.300 864.500 325.400 851 300 877.100 312 896.700 290.400 892.600 318.900 919.900 330.800 892.100 336.800 886.800 356.700 876.700 335.200 858.300 339.500 870.100 325.800 861.300 309.300 878.300 317.100 891.100 303 888.500 321.600 906.300 329.400 888.200 333.300 884.100 343.300 878.800 330.700 870.200 332.700 875.700 326.300 871.600 318.500 879.600 322.200 885.600 315.600 884.300 324.300 892.700 327.900 884.200 329.800"/>
      <path d="M47.300 489.300L139 436 232 488.300V597.300L139 649.300 46.700 596V508.300L139 455 215 499V586.700L139 630.700 63 586.700V518.300L139 473.700 198.700 508.300V577.300L139 611.700 79.700 577.300V527.700L139 493 182.700 517.700V567.700L139 592.700 95.700 567.700V537L139 511.700 166.300 527.700V558.300L139 573.700 112 558.300V546.700L139 531 150 537.300V548.700L139 555 128.300 548.700V536.700"/>
      <path d="M296 499L348.300 446.700H422.700L475.300 499V574.300L422.700 627H348.300L295 574.300V522.300L355 463H416L459 505.700V567.700L416 610.300H355L311.300 567.700V529L361.700 479H409.300L442.700 513V560.300L409.300 594.300H361.700L327.700 560.300V536.300L368.300 495.700H402.300L426.300 520V553.700L402.300 578H369L344.300 553.300V543.300L375 512.300H395L410 527.300V547.300L395.700 561.700H375.700L362.300 548.300 383.300 528.300H388.300L394 533.700V540.300L388.300 545.700H381.700L376.700 540.300V534.300L383.300 528.300"/>
      <path d="M540 530A102.700 100 0 0 1 642.700 430 96.600 97 0 0 1 739.300 527 92.600 95.300 0 0 1 646.700 622.300 93.400 92.300 0 0 1 553.300 530 89.400 87.700 0 0 1 642.700 442.300 84 84.400 0 0 1 726.700 526.700 81 83.300 0 0 1 645.700 610 80 80 0 0 1 565.700 530 76 74.300 0 0 1 641.700 455.700 72.600 72.300 0 0 1 714.300 528 68.600 69.700 0 0 1 645.700 597.700 67.400 67.700 0 0 1 578.300 530 63.400 61.700 0 0 1 641.700 468.300 60 59.700 0 0 1 701.700 528 56 56.300 0 0 1 645.700 584.300 54.700 54.300 0 0 1 591 530 50.700 49 0 0 1 641.700 481 47.300 47 0 0 1 689 528 43.300 43.700 0 0 1 645.700 571.700 42.400 41.700 0 0 1 603.300 530 38.400 36.700 0 0 1 641.700 493.300 34.300 34.700 0 0 1 676 528 30.300 31 0 0 1 645.700 559 29.700 29 0 0 1 616 530 25.700 24 0 0 1 641.700 506 21.600 22 0 0 1 663.300 528 17.600 18.700 0 0 1 645.700 546.700 16.700 16.700 0 0 1 629 530 11 11 0 0 1 640 519 10.700 9 0 0 1 650.700 528 5.700 5.300 0 0 1 645 533.300 3.300 2.300 0 0 1 641.700 531"/>
      <path d="M971.700 450A101.700 101.700 0 0 1 815 583.300L827.700 571A83.300 83.300 0 0 0 956.700 461.700L942.700 472.300A65 65 0 0 1 841 557.300L854.300 545A46.700 46.700 0 0 0 927.700 483.300L913.300 493.300A28.300 28.300 0 0 1 868.300 531.700L882.300 520A10 10 0 0 0 898.300 505"/>
    </g>
    <path class="hair" d="M230.500 132V642"/>
    <path class="cut" d="M230.500 488V597"/>
    <g class="red">
      <path d="M220 386.700L277.300 265.300"/>
      <path d="M361.700 297L561 262"/>
      <path d="M622 323.700L884 335"/>
      <path d="M896.700 405.700L971.700 450"/>
      <path d="M898 505L643 530"/>
      <path d="M540 530L377.700 533.300"/>
      <path d="M296 499L128.300 536.700"/>
    </g>
  </svg>
  <aside class="rightbar">
    <svg class="ic"><use href="#r-line"/></svg>
    <svg class="ic"><use href="#r-arc"/></svg>
    <svg class="ic"><use href="#r-circ"/></svg>
    <svg class="ic"><use href="#r-rect"/></svg>
    <svg class="ic"><use href="#r-mesh"/></svg>
    <svg class="ic"><use href="#r-wave"/></svg>
    <svg class="ic"><use href="#r-surf"/></svg>
    <svg class="ic"><use href="#r-tri"/></svg>
    <svg class="ic"><use href="#r-hook"/></svg>
    <svg class="ic"><use href="#r-ball"/></svg>
    <svg class="ic"><use href="#r-round"/></svg>
    <svg class="ic"><use href="#r-hook2"/></svg>
    <svg class="ic"><use href="#r-hook"/></svg>
    <svg class="ic" viewBox="0 0 24 24"><use href="#r-grid"/><text x="3" y="23" class="ti">v</text></svg>
    <svg class="ic"><use href="#r-pin"/></svg>
    <svg class="ic"><use href="#r-pack"/></svg>
    <svg class="ic"><use href="#r-fold"/></svg>
  </aside>
</main>

<svg class="mark" viewBox="755 548 306 107">
  <path class="mark-hex" d="M801.700 552.700L845 578V624L801.700 649.300 760 624V576.700z"/>
  <path class="mark-swoosh" d="M762 620C790 570 820 560 845 575M790 650C775 620 780 590 802 578M845 620C825 640 800 640 780 625"/>
  <path class="mark-cube" d="M801.700 578.300L821.700 590V613.300L801.700 625 781.700 613.300V590z"/>
  <path class="mark-swoosh" d="M781.700 590L801.700 601.700 821.700 590M801.700 601.700V625"/>
  <text class="mark-big" x="853" y="609" textLength="197" lengthAdjust="spacingAndGlyphs">3D世界网</text>
  <text class="mark-url" x="853" y="632" textLength="197" lengthAdjust="spacing">WWW.3DSJW.COM</text>
</svg>
</body>
</html>
```
FILE: styles.css
```css
* { box-sizing: border-box; }
html, body { margin: 0; padding: 0; }
body {
  position: relative;
  width: 1061px;
  height: 655px;
  overflow: hidden;
  background: #d4d4d4;
  display: flex;
  flex-direction: column;
  font-family: "Noto Sans CJK SC", "Liberation Sans", sans-serif;
}
.defs { position: absolute; width: 0; height: 0; }
.toolbars { flex: none; }
.row { display: flex; align-items: center; overflow: hidden; }
.r1 { height: 31px; border-bottom: 1px solid #b4b4b4; }
.r2 { height: 34px; border-bottom: 1px solid #f2f2f2; }
.r3 { height: 35px; background: #d4d4d4; border-bottom: 3px solid #9c9c9c; }
.r4 { height: 32px; background: linear-gradient(#bebebe, #d2d2d2 40%, #d6d6d6); }

.box { display: flex; align-items: center; width: 127px; height: 100%; border-right: 1px solid #ababab; }

.ic { display: block; flex: none; width: 24px; height: 24px; overflow: hidden; }
.ic + .ic { margin-left: 7px; }
.row .bino { width: 28px; }
.sm { display: block; flex: none; width: 20px; height: 20px; }
.wide { display: block; flex: none; width: 29px; height: 29px; }
.caret {
  display: block;
  flex: none;
  width: 0;
  height: 0;
  margin: 0 2px 0 0;
  border-left: 4px solid transparent;
  border-right: 4px solid transparent;
  border-top: 4px solid #000;
}
.caret.big { margin: 0; border-left-width: 6px; border-right-width: 6px; border-top-width: 6px; }
.more { display: flex; flex-direction: column; align-items: center; justify-content: space-between; flex: none; width: 10px; height: 23px; }
.more .caret { margin: 0; }
.chev { display: block; width: 10px; height: 8px; }
.sep { display: block; flex: none; width: 2px; height: 100%; border-left: 1px solid #aaa; border-right: 1px solid #f4f4f4; }
.grip { display: block; flex: none; width: 3px; height: 24px; margin: 0 4px 0 2px; border-left: 3px dotted #8c8c8c; }

.row .start14 { margin-left: -14px; }
.row .start7 { margin-left: -7px; }
.row .start17 { margin-left: -17px; }
.row .ml-3 { margin-left: -4px; }
.row .ml1 { margin-left: 1px; }
.row .ml2 { margin-left: 2px; }
.row .ml3 { margin-left: 3px; }
.row .ml4 { margin-left: 4px; }
.row .ml5 { margin-left: 5px; }
.row .ml6 { margin-left: 6px; }
.row .ml7 { margin-left: 7px; }
.row .ml9 { margin-left: 9px; }
.row .ml12 { margin-left: 12px; }
.row .ml19 { margin-left: 19px; }
.row .ml32 { margin-left: 32px; }

.combo {
  display: flex;
  align-items: center;
  justify-content: space-between;
  flex: none;
  width: 161px;
  height: 21px;
  margin-left: -20px;
  padding-left: 8px;
  background: #fff;
  border: 1px solid #8a8a8a;
  border-radius: 3px;
  font-size: 13px;
  line-height: 19px;
  color: #000;
}
.combo-btn {
  display: flex;
  align-items: center;
  justify-content: center;
  width: 16px;
  height: 19px;
  background: linear-gradient(#a8c8f0, #3a6cc0);
  border: 1px solid #1c3c84;
  border-radius: 2px;
}

.work { position: relative; flex: 1; display: flex; min-height: 0; }
.ruler {
  flex: none;
  width: 6px;
  background-color: #dedede;
  background-image: repeating-linear-gradient(transparent 0 52px, #555 52px 53px, transparent 53px 62px);
  background-size: 3px 100%;
  background-repeat: no-repeat;
}
.canvas { display: block; flex: none; width: 1032px; height: 523px; background: linear-gradient(#00004f, #000 100%); }
.cy path { fill: none; stroke: #00f4f4; stroke-width: 3; stroke-linejoin: miter; }
.red path { fill: none; stroke: #ff0010; stroke-width: 3.500; stroke-dasharray: 9 7; }
.cut { fill: none; stroke: #e8001c; stroke-width: 1.500; }
.hair { fill: none; stroke: #f4f4f4; stroke-width: 1; }
.rightbar {
  flex: none;
  width: 23px;
  padding: 8px 0 0 5px;
  display: flex;
  flex-direction: column;
  overflow: hidden;
  background: #d6d6d6;
  border-top: 1px solid #bbb;
}
.rightbar .ic + .ic { margin-left: 0; margin-top: 7px; }

.mark { position: absolute; left: 755px; top: 548px; width: 306px; height: 107px; opacity: .82; }
.mark-hex { fill: #1d5a8e; stroke: #a6a6a6; stroke-width: 3; }
.mark-cube { fill: #1e6a96; stroke: #b0b0b0; stroke-width: 4; }
.mark-swoosh { fill: none; stroke: #9aa6b0; stroke-width: 1; }
.mark-big { font-family: "Noto Sans CJK SC", sans-serif; font-weight: 900; font-size: 43px; fill: #1f6c9c; stroke: #a0acb4; stroke-width: 2; }
.mark-url { font-family: "DejaVu Sans", sans-serif; font-weight: 700; font-size: 16px; fill: #2670a0; stroke: #a0acb4; stroke-width: 1.200; }

.ta { font: 700 16px "Liberation Serif", serif; fill: #0a18d8; }
.tb { font: 700 12px "Liberation Serif", serif; text-anchor: middle; fill: #0a1a7c; }
.tc { font: 700 13px "Liberation Sans", sans-serif; text-anchor: middle; fill: #e81818; }
.td { font: 700 8px "Liberation Sans", sans-serif; text-anchor: middle; fill: #111; }
.te { font: 700 16px "Liberation Serif", serif; text-anchor: middle; fill: #000; }
.tf { font: 700 17px "Liberation Sans", sans-serif; text-anchor: middle; fill: #0a1a9c; }
.tg { font: 700 21px "Liberation Serif", serif; text-anchor: middle; fill: #000; }
.th { font: 700 24px "Liberation Serif", serif; text-anchor: middle; fill: #000; }
.ti { font: 700 9px "Liberation Sans", sans-serif; fill: #111; }
```
